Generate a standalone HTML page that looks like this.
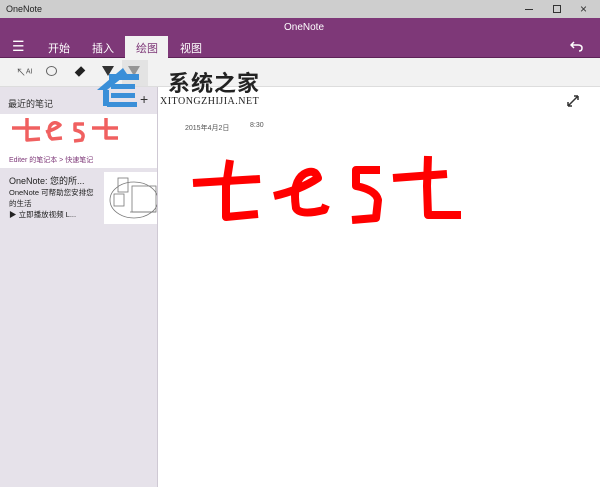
<!DOCTYPE html>
<html><head><meta charset="utf-8"><style>
*{margin:0;padding:0;box-sizing:border-box}
body{width:600px;height:487px;overflow:hidden;font-family:"Liberation Sans","Noto Sans CJK SC",sans-serif;background:#fff;position:relative}
.abs{position:absolute}
</style></head><body>
<div class="abs" style="left:0;top:0;width:600px;height:18px;background:#cecece;"></div>
<div class="abs" style="left:6px;top:4px;font-size:9px;color:#222">OneNote</div>
<div class="abs" style="left:525px;top:9px;width:8px;height:1px;background:#333"></div>
<div class="abs" style="left:553px;top:5px;width:8px;height:8px;border:1px solid #333"></div>
<div class="abs" style="left:580px;top:2px;font-size:12px;color:#333">×</div>
<div class="abs" style="left:0;top:18px;width:600px;height:40px;background:#7e3878;"></div>
<div class="abs" style="left:0;top:57px;width:600px;height:1px;background:#5e2258;"></div>
<div class="abs" style="left:284px;top:22px;font-size:10px;color:#fff">OneNote</div>
<div class="abs" style="left:12px;top:38px;font-size:14px;color:#fff">☰</div>
<div class="abs" style="left:48px;top:40px;font-size:11px;color:#fff">开始</div>
<div class="abs" style="left:92px;top:40px;font-size:11px;color:#fff">插入</div>
<div class="abs" style="left:125px;top:36px;width:43px;height:23px;background:#f2f2f2"></div>
<div class="abs" style="left:136px;top:40px;font-size:11px;color:#7e3878">绘图</div>
<div class="abs" style="left:180px;top:40px;font-size:11px;color:#fff">视图</div>
<svg class="abs" style="left:570px;top:40px" width="14" height="12"><path d="M4 2 L1 5 L4 8 M1 5 H8 Q12 5 12 8 Q12 11 9 11" fill="none" stroke="#fff" stroke-width="1.5"/></svg>
<div class="abs" style="left:0;top:58px;width:600px;height:28px;background:#f2f2f2;"></div>
<div class="abs" style="left:0;top:86px;width:600px;height:1px;background:#ddd;"></div>
<div class="abs" style="left:16px;top:64px;font-size:10px;color:#555">↖ᴬᴵ</div>
<div class="abs" style="left:46px;top:66px;width:11px;height:10px;border:1px solid #666;border-radius:50%"></div>
<div class="abs" style="left:77px;top:67px;width:6px;height:9px;background:#222;transform:rotate(45deg)"></div>
<svg class="abs" style="left:100px;top:64px" width="60" height="16"><path d="M2 2 H14 L8 12Z M28 2 H40 L34 12Z" fill="#333"/></svg>
<div class="abs" style="left:122px;top:60px;width:26px;height:26px;background:#d8d8d8;opacity:.6"></div>
<div class="abs" style="left:0;top:87px;width:157px;height:400px;background:#e6e2ea;"></div>
<div class="abs" style="left:157px;top:87px;width:1px;height:400px;background:#cfc9d4;"></div>
<div class="abs" style="left:8px;top:97px;font-size:9px;color:#333">最近的笔记</div>
<div class="abs" style="left:140px;top:91px;font-size:14px;color:#333">+</div>
<div class="abs" style="left:0;top:114px;width:157px;height:54px;background:#fff"></div>
<svg class="abs" style="left:0;top:114px" width="157" height="30"><g fill="none" stroke="#f06060" stroke-width="3.5" stroke-linejoin="round"><path d="M12 14 H40"/><path d="M27 4 V26 L40 25"/><path d="M46 18 Q56 15 60 11 Q54 6 50 12 Q47 22 52 25 L62 24"/><path d="M84 10 H75 V16 Q84 18 83 23 L82 26 L74 27"/><path d="M92 14 H118"/><path d="M106 4 V24 L118 24"/></g></svg>
<div class="abs" style="left:9px;top:155px;font-size:7px;color:#7e3878">Editer 的笔记本 &gt; 快速笔记</div>
<div class="abs" style="left:0;top:170px;width:157px;height:56px;background:#e6e2ea"></div>
<div class="abs" style="left:9px;top:174px;font-size:9px;color:#222">OneNote: 您的所...</div>
<div class="abs" style="left:9px;top:187px;font-size:7.5px;color:#222;line-height:11px;width:100px">OneNote 可帮助您安排您<br>的生活<br>▶ 立即播放视频 L...</div>
<div class="abs" style="left:104px;top:172px;width:53px;height:52px;background:#fff"></div>
<svg class="abs" style="left:104px;top:172px" width="53" height="52"><g fill="none" stroke="#777" stroke-width=".8"><ellipse cx="30" cy="28" rx="24" ry="18"/><rect x="14" y="6" width="10" height="14"/><rect x="28" y="14" width="24" height="26"/><rect x="10" y="22" width="10" height="12"/><path d="M26 40 H52"/></g></svg>
<svg class="abs" style="left:93px;top:60px" width="60" height="50"><g fill="#3a8fd8"><path d="M4 30 L30 8 L34 14 L14 30Z"/><rect x="16" y="14" width="30" height="6"/><rect x="18" y="24" width="24" height="5"/><rect x="18" y="33" width="24" height="5"/><rect x="14" y="42" width="30" height="5"/><path d="M10 30 V46 H16 V30Z"/></g></svg>
<div class="abs" style="left:168px;top:66px;font-size:22px;font-weight:bold;color:#222;letter-spacing:1px">系统之家</div>
<div class="abs" style="left:160px;top:96px;font-size:10px;font-family:'Liberation Serif',serif;color:#222;letter-spacing:.5px">XITONGZHIJIA.NET</div>
<div class="abs" style="left:185px;top:123px;font-size:7px;color:#555">2015年4月2日</div>
<div class="abs" style="left:250px;top:122px;font-size:7px;color:#555">8:30</div>
<svg class="abs" style="left:566px;top:94px" width="14" height="14"><path d="M2 12 L12 2 M2 12 V8 M2 12 H6 M12 2 H8 M12 2 V6" fill="none" stroke="#333" stroke-width="1.5"/></svg>
<svg class="abs" style="left:0;top:0" width="600" height="487"><g fill="none" stroke="#ff0000" stroke-width="8" stroke-linejoin="round" stroke-linecap="butt"><path d="M193 183 L260 179"/><path d="M230 160 L226 186 L226 217 L258 214"/><path d="M274 196 Q300 190 318 178 Q315 168 304 174 Q292 182 296 208 Q300 216 324 210 L326 205"/><path d="M380 170 L356 170 L356 186 Q376 190 378 200 L376 218 L352 220"/><path d="M393 178 L447 174"/><path d="M428 156 L427 186 L428 215 L461 215"/></g></svg>
</body></html>
